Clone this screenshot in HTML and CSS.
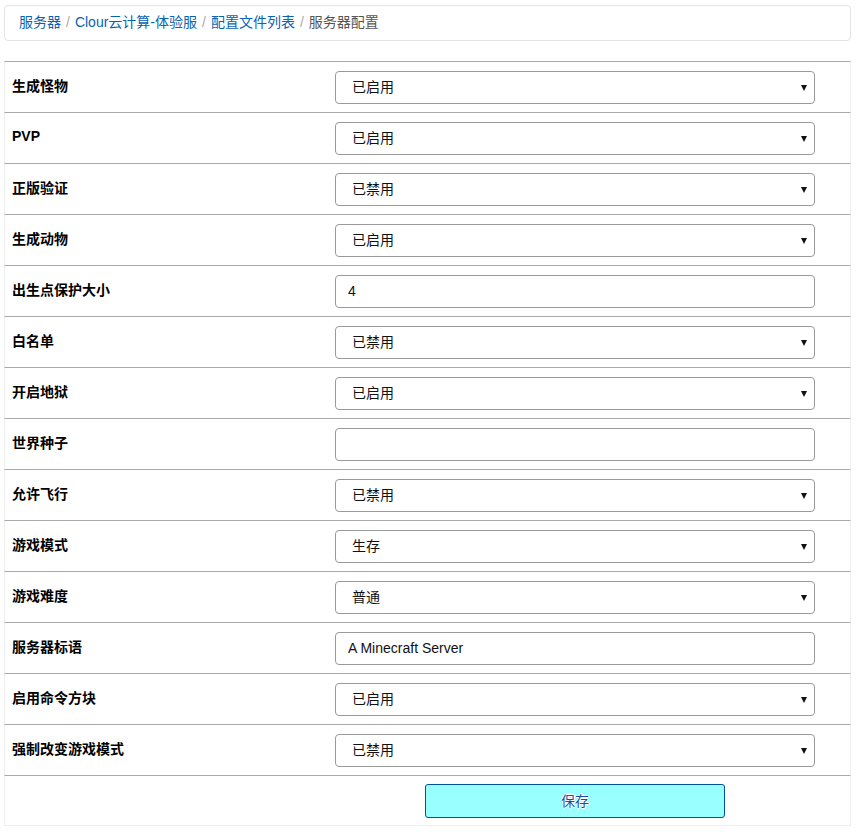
FILE: index.html
```html
<!DOCTYPE html>
<html lang="zh-CN">
<head>
<meta charset="utf-8">
<title>服务器配置</title>
<link rel="stylesheet" href="styles.css">
</head>
<body>
<div class="page">
  <nav class="crumbs">
    <a href="#">服务器</a><span class="sep">/</span><a href="#">Clour云计算-体验服</a><span class="sep">/</span><a href="#">配置文件列表</a><span class="sep">/</span><span class="current">服务器配置</span>
  </nav>
  <div class="table">
    <div class="row"><div class="label">生成怪物</div><div class="field"><span class="sel"><select><option>已启用</option><option>已禁用</option></select></span></div></div>
    <div class="row"><div class="label">PVP</div><div class="field"><span class="sel"><select><option>已启用</option><option>已禁用</option></select></span></div></div>
    <div class="row"><div class="label">正版验证</div><div class="field"><span class="sel"><select><option>已禁用</option><option>已启用</option></select></span></div></div>
    <div class="row"><div class="label">生成动物</div><div class="field"><span class="sel"><select><option>已启用</option><option>已禁用</option></select></span></div></div>
    <div class="row"><div class="label">出生点保护大小</div><div class="field"><input type="text" value="4"></div></div>
    <div class="row"><div class="label">白名单</div><div class="field"><span class="sel"><select><option>已禁用</option><option>已启用</option></select></span></div></div>
    <div class="row"><div class="label">开启地狱</div><div class="field"><span class="sel"><select><option>已启用</option><option>已禁用</option></select></span></div></div>
    <div class="row"><div class="label">世界种子</div><div class="field"><input type="text" value=""></div></div>
    <div class="row"><div class="label">允许飞行</div><div class="field"><span class="sel"><select><option>已禁用</option><option>已启用</option></select></span></div></div>
    <div class="row"><div class="label">游戏模式</div><div class="field"><span class="sel"><select><option>生存</option><option>创造</option><option>冒险</option></select></span></div></div>
    <div class="row"><div class="label">游戏难度</div><div class="field"><span class="sel"><select><option>普通</option><option>和平</option><option>简单</option><option>困难</option></select></span></div></div>
    <div class="row"><div class="label">服务器标语</div><div class="field"><input type="text" value="A Minecraft Server"></div></div>
    <div class="row"><div class="label">启用命令方块</div><div class="field"><span class="sel"><select><option>已启用</option><option>已禁用</option></select></span></div></div>
    <div class="row"><div class="label">强制改变游戏模式</div><div class="field"><span class="sel"><select><option>已禁用</option><option>已启用</option></select></span></div></div>
    <div class="row last"><button type="button" class="save">保存</button></div>
  </div>
</div>
</body>
</html>
```

FILE: styles.css
```css
* { box-sizing: border-box; }
html, body { margin: 0; padding: 0; background: #fff; }
body {
  font-family: "Liberation Sans", Arial, "Noto Sans CJK SC", sans-serif;
  font-size: 14px;
  color: #222;
}
.page { padding: 5px 6px 0 4px; }
.crumbs {
  height: 36px;
  border: 1px solid #e3e3e3;
  border-radius: 4px;
  padding: 0 14px 2px;
  display: flex;
  align-items: center;
  line-height: 20px;
  font-size: 14px;
}
.crumbs a { color: #0a63b0; text-decoration: none; }
.crumbs .sep { color: #aaa; padding: 0 5px; }
.crumbs .current { color: #555; }
.table { margin-top: 20px; }
.row {
  display: flex;
  align-items: center;
  height: 51px;
  border-top: 1px solid #aaa;
  border-left: 1px solid #eee;
  border-right: 1px solid #eee;
}
.row.last {
  border-bottom: 1px solid #eee;
  padding-left: 420px;
}
.label {
  width: 330px;
  padding-left: 7px;
  padding-bottom: 4px;
  font-weight: bold;
  color: #000;
}
.field { width: 480px; }
.sel { position: relative; display: block; }
.sel::after {
  content: "";
  position: absolute;
  right: 8px;
  top: 14px;
  border-left: 3.5px solid transparent;
  border-right: 3.5px solid transparent;
  border-top: 6px solid #111;
  pointer-events: none;
}
select, input {
  display: block;
  width: 480px;
  height: 33px;
  border: 1px solid #999;
  border-radius: 4px;
  background: #fff;
  font-family: "Liberation Sans", Arial, "Noto Sans CJK SC", sans-serif;
  font-size: 14px;
  color: #111;
  margin: 0;
}
select {
  -webkit-appearance: none;
  appearance: none;
  padding: 0 24px 0 16px;
}
input { padding: 0 12px; }
.save {
  width: 300px;
  height: 34px;
  background: #99ffff;
  border: 1px solid #0050a8;
  border-radius: 3px;
  padding: 0 0 2px;
  font-family: "Noto Sans CJK SC", sans-serif;
  font-size: 14px;
  color: #1a4f9e;
  text-shadow: 1px 0 0 #fff, -1px 0 0 #fff, 0 1px 0 #fff, 0 -1px 0 #fff;
  cursor: pointer;
}
```
